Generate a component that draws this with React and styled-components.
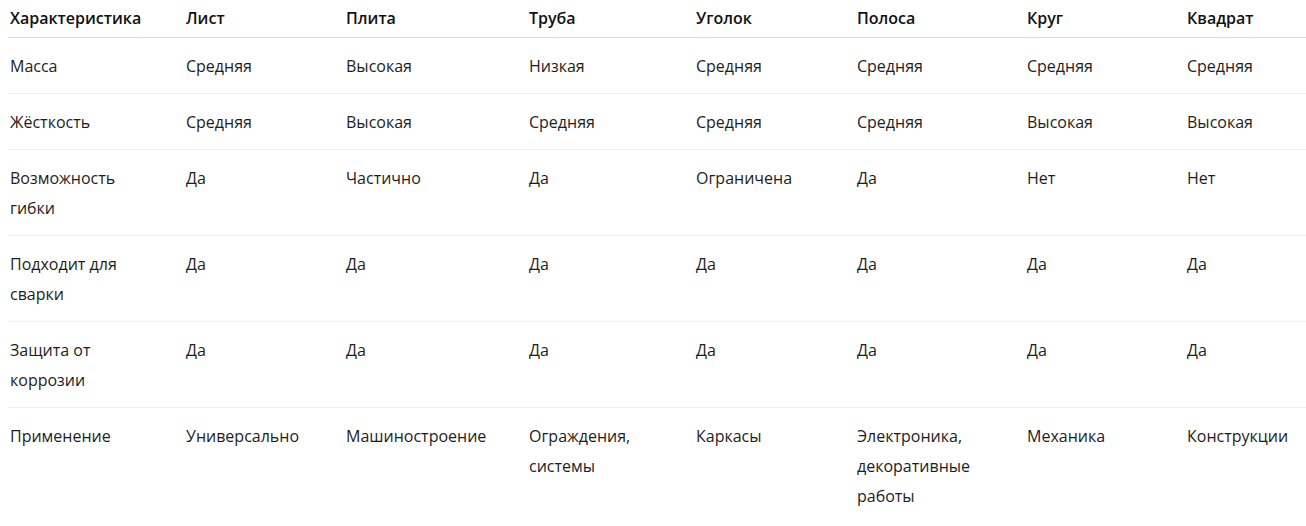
import React from "react";
import styled, { createGlobalStyle } from "styled-components";

const Global = createGlobalStyle`
  html, body {
    margin: 0;
    padding: 0;
    background: #ffffff;
  }
  body {
    font-family: "Open Sans", "Noto Sans", "Liberation Sans", sans-serif;
    color: #1a1a1a;
  }
`;

const Table = styled.table`
  margin-left: 8px;
  width: 1298px;
  border-collapse: collapse;
  table-layout: fixed;
  font-size: 16px;
  line-height: 30px;
`;

const Head = styled.th`
  text-align: left;
  font-weight: 600;
  padding: 3px 2px 4px;
  border-bottom: 1px solid #d9d9d9;
  color: #111;
  white-space: nowrap;
`;

const Cell = styled.td`
  vertical-align: top;
  padding: 13px 28px 12px 2px;
  border-bottom: ${(p) => (p.$last ? "none" : "1px solid #f0f0f0")};
  color: #1d1d1d;
`;

const widths = [176, 160, 183, 167, 161, 170, 160, 121];

const headers = ["Характеристика", "Лист", "Плита", "Труба", "Уголок", "Полоса", "Круг", "Квадрат"];

const rows = [
  ["Масса", "Средняя", "Высокая", "Низкая", "Средняя", "Средняя", "Средняя", "Средняя"],
  ["Жёсткость", "Средняя", "Высокая", "Средняя", "Средняя", "Средняя", "Высокая", "Высокая"],
  ["Возможность гибки", "Да", "Частично", "Да", "Ограничена", "Да", "Нет", "Нет"],
  ["Подходит для сварки", "Да", "Да", "Да", "Да", "Да", "Да", "Да"],
  ["Защита от коррозии", "Да", "Да", "Да", "Да", "Да", "Да", "Да"],
  ["Применение", "Универсально", "Машиностроение", "Ограждения, системы", "Каркасы", "Электроника, декоративные работы", "Механика", "Конструкции"],
];

export default function App() {
  return (
    <>
      <Global />
      <Table>
        <colgroup>
          {widths.map((w, i) => (
            <col key={i} style={{ width: w }} />
          ))}
        </colgroup>
        <thead>
          <tr>
            {headers.map((h) => (
              <Head key={h}>{h}</Head>
            ))}
          </tr>
        </thead>
        <tbody>
          {rows.map((r, i) => (
            <tr key={i}>
              {r.map((c, j) => (
                <Cell key={j} $last={i === rows.length - 1}>{c}</Cell>
              ))}
            </tr>
          ))}
        </tbody>
      </Table>
    </>
  );
}
